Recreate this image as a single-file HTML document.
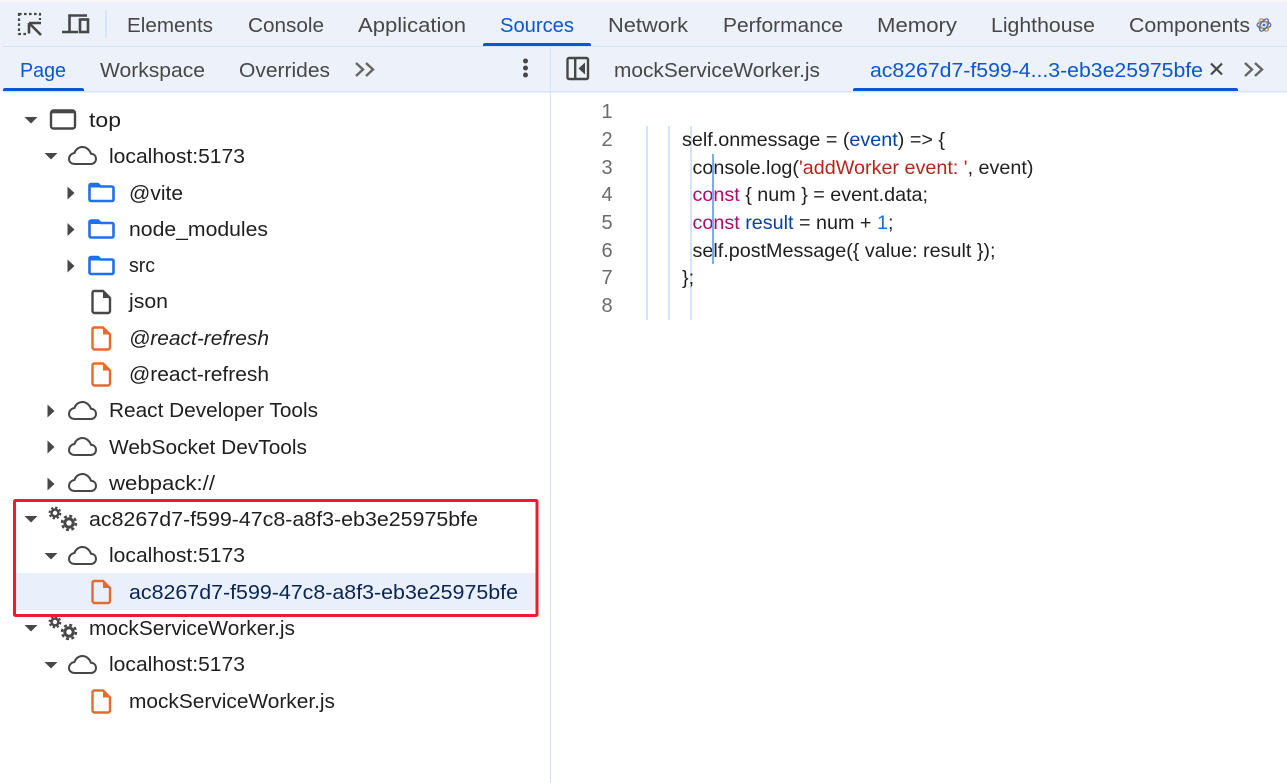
<!DOCTYPE html>
<html><head><meta charset="utf-8"><style>
html,body{margin:0;padding:0;background:#fff;width:1287px;height:783px;overflow:hidden}
svg{display:block}
text{font-family:"Liberation Sans",sans-serif;font-size:20.6px;white-space:pre}
.t{fill:#474747}.r{fill:#1f1f1f}.a{fill:#0b57d0}
.c{font-size:19.75px;fill:#1f1f1f}
.n{font-size:20px;fill:#6b6b6b}
.k{fill:#b5056e}.v{fill:#0842a0}.s{fill:#b3261e}.b{fill:#1a6fd8}
</style></head><body>
<svg width="1287" height="783" viewBox="0 0 1287 783" xmlns="http://www.w3.org/2000/svg">
<defs>
<path id="dn" d="M-6.5 -3H6.5L0 3.5Z" fill="#474747"/>
<path id="rt" d="M-3.5 -6.5V6.5L3.5 0Z" fill="#474747"/>
<g id="cloud"><path d="M7 18H23C26 18 28 15.5 28 13C28 10 26 8 23 7.8C21.5 3.5 18 1 14.5 1C10.5 1 7.5 3.5 6.5 7C3.5 7.3 1 10 1 13C1 16 3.5 18 7 18Z" fill="none" stroke="#474747" stroke-width="2"/></g>
<g id="folder"><path d="M1.5 3A1.5 1.5 0 0 1 3 1.5H10L12.5 4H24A1.5 1.5 0 0 1 25.5 5.5V17A1.5 1.5 0 0 1 24 18.5H3A1.5 1.5 0 0 1 1.5 17Z" fill="none" stroke="#1f6ff0" stroke-width="2.6"/><path d="M2 2H10L12.5 5H2Z" fill="#1f6ff0"/></g>
<g id="file"><path d="M1.5 3A2 2 0 0 1 3.500 1.500H12L19 8.500V21.500A2 2 0 0 1 17 23.500H3.500A2 2 0 0 1 1.500 21.500Z" fill="none" stroke="currentColor" stroke-width="2.400"/><path d="M12 1.500V8.500H19Z" fill="currentColor"/></g>
<g id="gears">
<circle cx="8" cy="8" r="3.400" fill="none" stroke="#474747" stroke-width="2.400"/>
<circle cx="8" cy="8" r="5.300" fill="none" stroke="#474747" stroke-width="2.200" stroke-dasharray="2.300 1.860"/>
<circle cx="22" cy="18" r="4.200" fill="none" stroke="#474747" stroke-width="3"/>
<circle cx="22" cy="18" r="7" fill="none" stroke="#474747" stroke-width="2.400" stroke-dasharray="3 2.500"/>
</g>
<path id="chev" d="M1 1L8 7.500L1 14M11 1L18 7.500L11 14" fill="none" stroke="#666" stroke-width="2.400"/>
</defs>

<rect width="1287" height="783" fill="#fff"/>
<rect width="1287" height="91" y="0" fill="#ecf1fa"/>
<rect width="1287" height="2" y="0" fill="#f7f7f7"/>
<rect x="3" y="46" width="1284" height="1" fill="#d6e4fb"/>
<rect x="3" y="91" width="1284" height="1.500" fill="#d6e4fb"/>
<rect x="550" y="47" width="1" height="736" fill="#d6e4fb"/>
<rect x="105" y="11" width="2" height="26" fill="#d6e4fb"/>

<!-- inspect icon -->
<rect x="19" y="14" width="21" height="20" fill="none" stroke="#474747" stroke-width="2.200" stroke-dasharray="2.600 2.400"/>
<rect x="26" y="20" width="16" height="16" fill="#ecf1fa"/>
<path d="M29 23H41M29 23V33.500M29.500 23.500L41 35" fill="none" stroke="#474747" stroke-width="2.600"/>
<!-- device icon -->
<path d="M69.500 32V15.500H87M62 32H78" fill="none" stroke="#474747" stroke-width="2.600"/>
<rect x="80" y="19.500" width="8" height="12.500" fill="none" stroke="#474747" stroke-width="2.600"/>

<text class="t" x="127" y="32" textLength="86" lengthAdjust="spacingAndGlyphs">Elements</text>
<text class="t" x="248" y="32" textLength="76" lengthAdjust="spacingAndGlyphs">Console</text>
<text class="t" x="358" y="32" textLength="108" lengthAdjust="spacingAndGlyphs">Application</text>
<text class="a" x="500" y="32" textLength="74" lengthAdjust="spacingAndGlyphs">Sources</text>
<text class="t" x="608" y="32" textLength="80" lengthAdjust="spacingAndGlyphs">Network</text>
<text class="t" x="723" y="32" textLength="120" lengthAdjust="spacingAndGlyphs">Performance</text>
<text class="t" x="877" y="32" textLength="80" lengthAdjust="spacingAndGlyphs">Memory</text>
<text class="t" x="991" y="32" textLength="104" lengthAdjust="spacingAndGlyphs">Lighthouse</text>
<text class="t" x="1129" y="32" textLength="121" lengthAdjust="spacingAndGlyphs">Components</text>
<g fill="none" stroke="#5a6f9c" stroke-width="1.300" transform="translate(1264 25)">
<ellipse rx="6.800" ry="3.400"/><ellipse rx="6.800" ry="3.400" transform="rotate(60)" stroke="#c9925a"/><ellipse rx="6.800" ry="3.400" transform="rotate(120)"/><circle r="1.400" fill="#3c6fc0" stroke="none"/>
</g>
<path d="M483 46V45A2 2 0 0 1 485 43H589A2 2 0 0 1 591 45V46Z" fill="#0b57d0"/>

<text class="a" x="20" y="77" textLength="46" lengthAdjust="spacingAndGlyphs">Page</text>
<text class="t" x="100" y="77" textLength="105" lengthAdjust="spacingAndGlyphs">Workspace</text>
<text class="t" x="239" y="77" textLength="91" lengthAdjust="spacingAndGlyphs">Overrides</text>
<path d="M3 91V90A2 2 0 0 1 5 88H82A2 2 0 0 1 84 90V91Z" fill="#0b57d0"/>
<use href="#chev" x="355" y="62"/>
<circle cx="525.500" cy="61" r="2.500" fill="#474747"/><circle cx="525.500" cy="68" r="2.500" fill="#474747"/><circle cx="525.500" cy="75" r="2.500" fill="#474747"/>
<rect x="567.500" y="58" width="20.500" height="21" rx="1.500" fill="none" stroke="#474747" stroke-width="2.400"/>
<rect x="574" y="58" width="2.400" height="21" fill="#474747"/>
<path d="M585 62.500V74.500L578.500 68.500Z" fill="#474747"/>
<text class="t" x="614" y="77" textLength="206" lengthAdjust="spacingAndGlyphs">mockServiceWorker.js</text>
<text class="a" x="870" y="77" textLength="333" lengthAdjust="spacingAndGlyphs">ac8267d7-f599-4...3-eb3e25975bfe</text>
<path d="M1211 63.500L1222 74.500M1222 63.500L1211 74.500" stroke="#474747" stroke-width="2.200" fill="none"/>
<use href="#chev" x="1244" y="62"/>
<path d="M853 91V90A2 2 0 0 1 855 88H1236A2 2 0 0 1 1238 90V91Z" fill="#0b57d0"/>

<!-- tree -->
<rect x="13" y="573" width="525" height="37" fill="#e9f0fb"/>

<use href="#dn" x="31" y="120"/>
<rect x="51" y="110.500" width="24" height="18" rx="2.500" fill="none" stroke="#474747" stroke-width="2.400"/>
<rect x="51" y="110.500" width="24" height="2.800" fill="#474747"/>
<text class="r" x="89" y="127" textLength="32" lengthAdjust="spacingAndGlyphs">top</text>

<use href="#dn" x="51" y="156"/>
<use href="#cloud" x="68" y="146"/>
<text class="r" x="109" y="163" textLength="136" lengthAdjust="spacingAndGlyphs">localhost:5173</text>

<use href="#rt" x="71" y="193"/>
<use href="#folder" x="88" y="182.500"/>
<text class="r" x="129" y="200" textLength="54" lengthAdjust="spacingAndGlyphs">@vite</text>

<use href="#rt" x="71" y="229.500"/>
<use href="#folder" x="88" y="219"/>
<text class="r" x="129" y="236" textLength="139" lengthAdjust="spacingAndGlyphs">node_modules</text>

<use href="#rt" x="71" y="266"/>
<use href="#folder" x="88" y="255.500"/>
<text class="r" x="129" y="272" textLength="26" lengthAdjust="spacingAndGlyphs">src</text>

<use href="#file" x="91" y="289.500" color="#474747"/>
<text class="r" x="129" y="308" textLength="39" lengthAdjust="spacingAndGlyphs">json</text>

<use href="#file" x="91" y="326" color="#e8692c"/>
<text class="r" x="129" y="345" font-style="italic" textLength="140" lengthAdjust="spacingAndGlyphs">@react-refresh</text>

<use href="#file" x="91" y="362" color="#e8692c"/>
<text class="r" x="129" y="381" textLength="140" lengthAdjust="spacingAndGlyphs">@react-refresh</text>

<use href="#rt" x="51" y="411"/>
<use href="#cloud" x="68" y="401"/>
<text class="r" x="109" y="417" textLength="209" lengthAdjust="spacingAndGlyphs">React Developer Tools</text>

<use href="#rt" x="51" y="447"/>
<use href="#cloud" x="68" y="437"/>
<text class="r" x="109" y="454" textLength="198" lengthAdjust="spacingAndGlyphs">WebSocket DevTools</text>

<use href="#rt" x="51" y="484"/>
<use href="#cloud" x="68" y="473"/>
<text class="r" x="109" y="490" textLength="106" lengthAdjust="spacingAndGlyphs">webpack://</text>

<use href="#dn" x="31" y="519"/>
<use href="#gears" x="47" y="505"/>
<text class="r" x="89" y="526" textLength="389" lengthAdjust="spacingAndGlyphs">ac8267d7-f599-47c8-a8f3-eb3e25975bfe</text>

<use href="#dn" x="51" y="556"/>
<use href="#cloud" x="68" y="546"/>
<text class="r" x="109" y="562" textLength="136" lengthAdjust="spacingAndGlyphs">localhost:5173</text>

<use href="#file" x="91" y="579.500" color="#e8692c"/>
<text x="129" y="599" fill="#0a2350" textLength="389" lengthAdjust="spacingAndGlyphs">ac8267d7-f599-47c8-a8f3-eb3e25975bfe</text>

<use href="#dn" x="31" y="628"/>
<use href="#gears" x="47" y="614"/>
<text class="r" x="89" y="635" textLength="206" lengthAdjust="spacingAndGlyphs">mockServiceWorker.js</text>

<use href="#dn" x="51" y="665"/>
<use href="#cloud" x="68" y="655"/>
<text class="r" x="109" y="671" textLength="136" lengthAdjust="spacingAndGlyphs">localhost:5173</text>

<use href="#file" x="91" y="689" color="#e8692c"/>
<text class="r" x="129" y="708" textLength="206" lengthAdjust="spacingAndGlyphs">mockServiceWorker.js</text>

<rect x="14.500" y="500.500" width="522.500" height="115" rx="1" fill="none" stroke="#ee1c2e" stroke-width="3"/>

<!-- editor -->
<rect x="646" y="126" width="2" height="194" fill="#d3e3fd"/>
<rect x="668" y="126" width="2" height="194" fill="#d3e3fd"/>
<rect x="690" y="126" width="2" height="194" fill="#d3e3fd"/>

<text class="n" x="601.500" y="118">1</text>
<text class="n" x="601.500" y="146">2</text>
<text class="n" x="601.500" y="174">3</text>
<text class="n" x="601.500" y="201">4</text>
<text class="n" x="601.500" y="229">5</text>
<text class="n" x="601.500" y="257">6</text>
<text class="n" x="601.500" y="284">7</text>
<text class="n" x="601.500" y="312">8</text>

<text class="c" x="682" y="146">self.onmessage = (<tspan class="v">event</tspan>) =&gt; {</text>
<text class="c" x="692.500" y="174">console.log(<tspan class="s">'addWorker event: '</tspan>, event)</text>
<text class="c" x="692.500" y="201"><tspan class="k">const</tspan> { num } = event.data;</text>
<text class="c" x="692.500" y="229"><tspan class="k">const</tspan> <tspan class="v">result</tspan> = num + <tspan class="b">1</tspan>;</text>
<text class="c" x="692.500" y="257">self.postMessage({ value: result });</text>
<text class="c" x="682" y="284">};</text>
<rect x="712" y="154" width="2" height="110" fill="#7baaf7"/>
</svg>
</body></html>
